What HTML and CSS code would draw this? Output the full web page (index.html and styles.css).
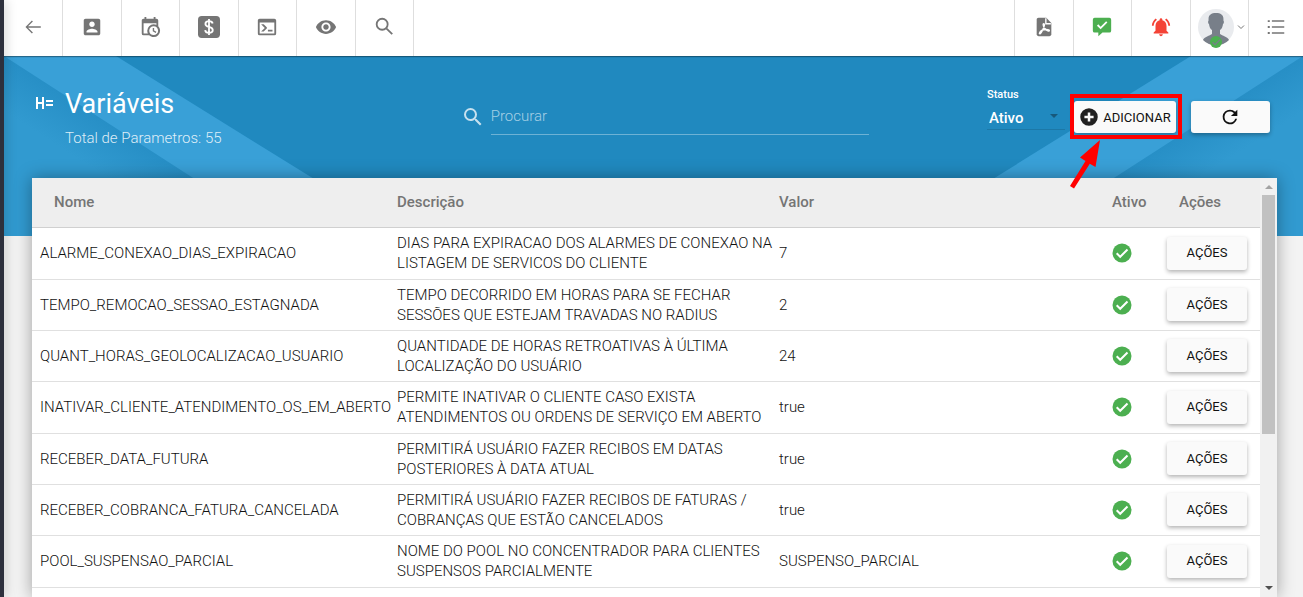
FILE: index.html
```html
<!DOCTYPE html>
<html lang="pt-BR">
<head>
<meta charset="utf-8">
<title>Variáveis</title>
<link rel="stylesheet" href="styles.css">
</head>
<body>
<div class="app">
  <div class="rail"></div>
  <div class="page">
    <header class="topbar">
      <button class="tool back" aria-label="Voltar"><svg class="icon" viewBox="0 0 24 24"><path d="M20.500 11.250H6.600l5.300-5.300L10.800 4.900 3.800 12l7 7.100 1.100-1.050-5.300-5.300H20.500z"/></svg></button>
      <nav class="tools">
        <button class="tool" aria-label="Contatos"><svg class="icon" viewBox="0 0 24 24"><path d="M3 5v14c0 1.100.89 2 2 2h14c1.100 0 2-.9 2-2V5c0-1.100-.9-2-2-2H5c-1.110 0-2 .9-2 2zm12 4c0 1.660-1.340 3-3 3s-3-1.340-3-3 1.340-3 3-3 3 1.340 3 3zm-9 8c0-2 4-3.100 6-3.100s6 1.100 6 3.100v1H6v-1z"/></svg></button>
        <button class="tool" aria-label="Agenda"><svg class="icon" viewBox="0 0 24 24"><path d="M15 13h1.500v2.820l2.440 1.410-.75 1.300L15 16.690V13m4-5H5v11h4.670c-.43-.91-.67-1.930-.67-3a7 7 0 0 1 7-7c1.070 0 2.090.24 3 .67V8M5 21a2 2 0 0 1-2-2V5c0-1.110.89-2 2-2h1V1h2v2h8V1h2v2h1a2 2 0 0 1 2 2v6.100c1.240 1.260 2 2.990 2 4.900a7 7 0 0 1-7 7c-1.910 0-3.640-.76-4.900-2H5m11-9.850A4.850 4.850 0 0 0 11.150 16c0 2.680 2.170 4.850 4.850 4.850A4.850 4.850 0 0 0 20.850 16c0-2.680-2.170-4.850-4.850-4.850z"/></svg></button>
        <button class="tool" aria-label="Financeiro"><svg class="icon" viewBox="0 0 24 24"><rect x="0" y="0" width="24" height="24" rx="4"/><path class="cut" d="M16 8.200C15.700 6.600 14.200 5.600 12 5.600c-2.300 0-3.900 1.200-3.900 3.050 0 4.300 8 2.300 8 6.600 0 1.900-1.700 3.150-4.100 3.150s-4-1.100-4.200-3M12 3.400v17.200"/></svg></button>
        <button class="tool" aria-label="Terminal"><svg class="icon" viewBox="0 0 24 24"><path d="M20 19V7H4v12h16m0-16a2 2 0 0 1 2 2v14a2 2 0 0 1-2 2H4a2 2 0 0 1-2-2V5c0-1.110.9-2 2-2h16m-7 14v-2h5v2h-5m-3.420-4L5.570 9H8.400l3.300 3.300c.39.39.39 1.030 0 1.420L8.420 17H5.590l3.990-4z"/></svg></button>
        <button class="tool" aria-label="Visualizar"><svg class="icon" viewBox="0 0 24 24"><path d="M12 4.500C7 4.500 2.730 7.610 1 12c1.730 4.390 6 7.500 11 7.500s9.270-3.110 11-7.500c-1.730-4.390-6-7.500-11-7.500zM12 17c-2.760 0-5-2.240-5-5s2.240-5 5-5 5 2.240 5 5-2.240 5-5 5zm0-8c-1.660 0-3 1.340-3 3s1.340 3 3 3 3-1.340 3-3-1.340-3-3-3z"/></svg></button>
        <button class="tool" aria-label="Pesquisar"><svg class="icon line" viewBox="0 0 24 24"><circle cx="10" cy="9" r="6"/><path d="M14.500 13.500l6.500 6.300"/></svg></button>
      </nav>
      <nav class="tools alerts">
        <button class="tool" aria-label="PDF"><svg class="icon" viewBox="0 0 24 24"><path d="M6 2h8.500L20 7.500V20a2 2 0 0 1-2 2H6a2 2 0 0 1-2-2V4c0-1.100.9-2 2-2z"/><path class="cut thin" d="M14 2.500V8.500h5.500M7 18.700c1-2.500 4.500-4.300 9.300-3.800 2.300.3 1.900 1.900.3 1.500-2.700-.7-5.200-4-5.500-6.600-.2-2.100 1.600-1.900 1.300.3-.6 3-3.200 8.400-4.400 9.100-.7.400-1.200.1-1-.5z"/></svg></button>
        <button class="tool ok" aria-label="Mensagens"><svg class="icon" viewBox="0 0 24 24"><path d="M20 2H4a2 2 0 0 0-2 2v12a2 2 0 0 0 2 2h4v4l4.500-4H20a2 2 0 0 0 2-2V4a2 2 0 0 0-2-2zM10.500 14.500L6.500 10.500l1.400-1.400 2.600 2.600 6-6 1.400 1.400z"/></svg></button>
        <button class="tool alarm" aria-label="Notificações"><svg class="icon" viewBox="0 0 24 24"><path d="M7.580 4.080L6.150 2.650C3.750 4.480 2.170 7.300 2.030 10.500h2c.15-2.650 1.510-4.970 3.550-6.420zm12.390 6.420h2c-.15-3.200-1.730-6.020-4.120-7.850l-1.420 1.430c2.020 1.450 3.390 3.770 3.540 6.420zM18 11c0-3.070-1.640-5.640-4.500-6.320V4c0-.83-.67-1.500-1.500-1.500s-1.500.67-1.500 1.500v.68C7.630 5.360 6 7.920 6 11v5l-2 2v1h16v-1l-2-2v-5zm-6 11c1.100 0 2-.9 2-2h-4c0 1.100.89 2 2 2z"/></svg></button>
        <button class="tool user" aria-label="Conta">
          <svg class="avatar" viewBox="0 0 36 40"><circle cx="18" cy="18" r="18" fill="#e9ebee"/><path fill="#787f89" d="M5 31c1-3 7-4.500 9-6v-4c-2-1-2.700-4-3-6-1-.5-1.200-3-.4-3.500C10 6 13 4 18 4s8 2 7.400 7.500c.8.500.6 3-.4 3.500-.3 2-1 5-3 6v4c2 1.500 8 3 9 6a18 18 0 0 1-26 0z"/><circle cx="18" cy="33" r="6" fill="#4caf50"/><path fill="none" stroke="#787f89" stroke-width="1.300" d="M14.500 33.200l2.500 2.500 5-5"/></svg>
          <svg class="chevron" viewBox="0 0 8 8"><path d="M1 2.500l3 3 3-3"/></svg>
        </button>
      </nav>
      <button class="tool menu" aria-label="Menu"><svg class="icon" viewBox="0 0 24 24"><path d="M3 4.500h2.200v2H3zm4.500.2H21v1.600H7.500zM3 11h2.200v2H3zm4.500.2H21v1.600H7.500zM3 17.500h2.200v2H3zm4.500.2H21v1.600H7.500z"/></svg></button>
    </header>

    <main class="main">
      <div class="backdrop">
        <svg class="rays" viewBox="0 0 330 180">
          <defs><linearGradient id="shade" gradientUnits="userSpaceOnUse" x1="110" y1="71" x2="85" y2="110"><stop offset="0" stop-color="#278fc6"/><stop offset="1" stop-color="#319ad0"/></linearGradient></defs>
          <path fill="#39a0d7" d="M0 0H112L402 180H0z"/><path fill="url(#shade)" d="M0 0L279 180H0z"/>
        </svg>
        <svg class="rays flip" viewBox="0 0 330 180">
          <path fill="#39a0d7" d="M0 0H112L402 180H0z"/><path fill="url(#shade)" d="M0 0L279 180H0z"/>
        </svg>
      </div>

      <section class="hero">
        <div class="heading">
          <svg class="mark" viewBox="0 0 18 14"><path d="M2 1v12M8 1v12M2 7H8M11 5H18M11 9H18"/></svg>
          <div>
            <h1 class="title">Variáveis</h1>
            <p class="subtitle">Total de Parametros: 55</p>
          </div>
        </div>
        <div class="search">
          <svg class="icon24" viewBox="0 0 24 24"><path d="M15.500 14h-.79l-.28-.27A6.470 6.470 0 0 0 16 9.500 6.500 6.500 0 1 0 9.500 16c1.610 0 3.090-.59 4.230-1.570l.27.28v.79l5 4.990L20.490 19l-4.990-5zm-6 0C7.010 14 5 11.990 5 9.500S7.010 5 9.500 5 14 7.010 14 9.500 11.990 14 9.500 14z"/></svg>
          <input class="query" type="text" placeholder="Procurar" aria-label="Procurar">
        </div>
        <div class="actions">
          <div class="status">
            <label class="status-label" for="status">Status</label>
            <select class="status-select" id="status"><option>Ativo</option></select>
            <svg class="caret" viewBox="0 0 8 4"><path d="M0 0h8L4 4z"/></svg>
          </div>
          <div class="spot">
            <button class="raised add"><svg class="plus" viewBox="0 0 24 24"><path d="M12 1.500a10.500 10.500 0 1 0 0 21 10.500 10.500 0 0 0 0-21zm5.500 12h-4v4h-3v-4h-4v-3h4v-4h3v4h4z"/></svg>ADICIONAR</button>
            <svg class="arrow" viewBox="0 0 34 50"><path d="M31 1L26.500 28l-5.700-3.200L5 49.500 1 47l15.500-25-5.500-3.500z"/></svg>
          </div>
          <button class="raised refresh" aria-label="Atualizar"><svg class="icon24" viewBox="0 0 24 24"><path d="M17.650 6.350A7.960 7.960 0 0 0 12 4a8 8 0 1 0 7.730 10h-2.080A6 6 0 1 1 12 6c1.660 0 3.140.69 4.220 1.780L13 11h7V4l-2.350 2.350z"/></svg></button>
        </div>
      </section>

      <section class="card">
        <div class="viewport">
          <table class="grid">
            <colgroup><col class="c-name"><col class="c-desc"><col><col class="c-on"><col class="c-act"></colgroup>
            <thead><tr><th class="first">Nome</th><th>Descrição</th><th>Valor</th><th>Ativo</th><th class="last">Ações</th></tr></thead>
            <tbody>
              <tr><td>ALARME_CONEXAO_DIAS_EXPIRACAO</td><td>DIAS PARA EXPIRACAO DOS ALARMES DE CONEXAO NA<br>LISTAGEM DE SERVICOS DO CLIENTE</td><td>7</td><td><svg class="check" viewBox="0 0 20 20"><use href="#tick"/></svg></td><td><button class="raised row-btn">AÇÕES</button></td></tr>
              <tr><td>TEMPO_REMOCAO_SESSAO_ESTAGNADA</td><td>TEMPO DECORRIDO EM HORAS PARA SE FECHAR<br>SESSÕES QUE ESTEJAM TRAVADAS NO RADIUS</td><td>2</td><td><svg class="check" viewBox="0 0 20 20"><use href="#tick"/></svg></td><td><button class="raised row-btn">AÇÕES</button></td></tr>
              <tr><td>QUANT_HORAS_GEOLOCALIZACAO_USUARIO</td><td>QUANTIDADE DE HORAS RETROATIVAS À ÚLTIMA<br>LOCALIZAÇÃO DO USUÁRIO</td><td>24</td><td><svg class="check" viewBox="0 0 20 20"><use href="#tick"/></svg></td><td><button class="raised row-btn">AÇÕES</button></td></tr>
              <tr><td>INATIVAR_CLIENTE_ATENDIMENTO_OS_EM_ABERTO</td><td>PERMITE INATIVAR O CLIENTE CASO EXISTA<br>ATENDIMENTOS OU ORDENS DE SERVIÇO EM ABERTO</td><td>true</td><td><svg class="check" viewBox="0 0 20 20"><use href="#tick"/></svg></td><td><button class="raised row-btn">AÇÕES</button></td></tr>
              <tr><td>RECEBER_DATA_FUTURA</td><td>PERMITIRÁ USUÁRIO FAZER RECIBOS EM DATAS<br>POSTERIORES À DATA ATUAL</td><td>true</td><td><svg class="check" viewBox="0 0 20 20"><use href="#tick"/></svg></td><td><button class="raised row-btn">AÇÕES</button></td></tr>
              <tr><td>RECEBER_COBRANCA_FATURA_CANCELADA</td><td>PERMITIRÁ USUÁRIO FAZER RECIBOS DE FATURAS /<br>COBRANÇAS QUE ESTÃO CANCELADOS</td><td>true</td><td><svg class="check" viewBox="0 0 20 20"><use href="#tick"/></svg></td><td><button class="raised row-btn">AÇÕES</button></td></tr>
              <tr><td>POOL_SUSPENSAO_PARCIAL</td><td>NOME DO POOL NO CONCENTRADOR PARA CLIENTES<br>SUSPENSOS PARCIALMENTE</td><td>SUSPENSO_PARCIAL</td><td><svg class="check" viewBox="0 0 20 20"><use href="#tick"/></svg></td><td><button class="raised row-btn">AÇÕES</button></td></tr>
            </tbody>
          </table>
        </div>
        <div class="scrollbar">
          <svg class="up" viewBox="0 0 8 4"><path d="M0 4h8L4 0z"/></svg>
          <div class="track"><div class="thumb"></div></div>
          <svg class="down" viewBox="0 0 8 4"><path d="M0 0h8L4 4z"/></svg>
        </div>
      </section>
    </main>
  </div>
</div>
<svg class="defs" aria-hidden="true"><symbol id="tick" viewBox="0 0 20 20"><circle cx="10" cy="10" r="9.500" fill="#4caf50"/><path d="M4.700 10.300l3.500 3.500 7.300-7.300" fill="none" stroke="#fff" stroke-width="2"/></symbol></svg>
</body>
</html>
```
FILE: styles.css
```css
* { box-sizing: border-box; }
body { margin: 0; font-family: Roboto, "Liberation Sans", sans-serif; font-size: 15px; color: #111; overflow: hidden; }
button, input, select { font: inherit; color: inherit; }
button { border: 0; padding: 0; cursor: pointer; }
svg { display: block; flex: none; }
.defs { position: absolute; width: 0; height: 0; }

.app { display: flex; height: 100vh; background: #f3f3f3; }
.rail { flex: 0 0 4px; background: #2d303d; box-shadow: 0 0 12px rgba(0, 0, 0, .35); z-index: 3; }
.page { flex: 1; min-width: 0; display: flex; flex-direction: column; }

.topbar { display: flex; height: 56px; background: #fff; box-shadow: 0 1px 1px rgba(0, 0, 0, .35); position: relative; z-index: 2; }
.tool { display: flex; align-items: center; justify-content: center; background: none; color: #757575; border-left: 1px solid #dedede; padding-bottom: 2px; }
.tool.back { width: 58px; border-left: 0; }
.tools { display: grid; grid-template-columns: repeat(6, 1fr); width: 352px; border-right: 1px solid #dedede; }
.tools.alerts { grid-template-columns: repeat(4, 1fr); width: 234px; margin-left: auto; border-right: 0; }
.tool.menu { width: 55px; }
.tool.ok { color: #4caf50; }
.tool.alarm { color: #f44336; }
.icon { width: 22px; height: 22px; fill: currentColor; }
.icon.line { fill: none; stroke: currentColor; stroke-width: 2; }
.icon24 { width: 24px; height: 24px; fill: currentColor; }
.cut { fill: none; stroke: #fff; stroke-width: 2; }
.cut.thin { stroke-width: 1.500; }
.tool.user { gap: 3px; padding: 2px 0 0 4px; }
.avatar { width: 36px; height: 40px; }
.chevron { width: 8px; height: 8px; margin-bottom: 4px; fill: none; stroke: #757575; }

.main { flex: 1; min-height: 0; display: flex; flex-direction: column; position: relative; }
.backdrop { position: absolute; top: 0; left: 0; right: 0; height: 180px; background: #2089bf; overflow: hidden; }
.rays { position: absolute; top: 0; left: 0; width: 330px; height: 180px; }
.rays.flip { left: auto; right: 0; transform: scaleX(-1); }

.hero { flex: 0 0 122px; display: grid; grid-template-columns: 35fr 32fr 33fr; position: relative; z-index: 1; color: #fff; }
.heading { display: flex; gap: 12px; padding: 31px 0 0 31px; }
.mark { width: 18px; height: 14px; margin-top: 9px; fill: none; stroke: #fff; stroke-width: 2; }
.title { margin: 0; font-size: 27px; line-height: 34px; font-weight: 400; }
.subtitle { margin: 7px 0 0; line-height: 20px; font-weight: 300; color: rgba(255, 255, 255, .85); }
.search { display: flex; align-items: center; gap: 6px; align-self: start; margin-top: 42px; padding: 0 5px 0 2px; color: rgba(255, 255, 255, .75); }
.query { flex: 1; min-width: 0; height: 37px; padding: 0; border: 0; border-bottom: 1px solid rgba(255, 255, 255, .35); background: none; outline: 0; }
.query::placeholder { color: rgba(255, 255, 255, .6); font-weight: 300; }
.actions { display: flex; justify-content: flex-end; align-items: flex-start; padding: 45px 33px 0 0; }
.status { width: 78px; margin-right: 9px; margin-top: -14px; display: flex; flex-direction: column; position: relative; }
.status-label { font-size: 11px; line-height: 15px; font-weight: 500; }
.status-select { appearance: none; height: 28px; padding: 4px 2px 0; border: 0; border-bottom: 1px solid rgba(0, 0, 0, .12); background: none; font-weight: 500; }
.caret { position: absolute; right: 7px; top: 27px; width: 8px; height: 4px; fill: #17597c; }

.raised { display: flex; align-items: center; justify-content: center; background: #fafafa; color: #111; border-radius: 3px; font-size: 13px; font-weight: 400; box-shadow: 0 2px 4px rgba(0, 0, 0, .3); }
.add { width: 102px; height: 32px; gap: 4px; }
.plus { width: 20px; height: 20px; fill: #212121; }
.refresh { width: 79px; height: 32px; margin-left: 15px; }
.refresh .icon24 { width: 22px; height: 22px; }
.spot { position: relative; }
.spot::after { content: ""; position: absolute; inset: -7px -6px -6px -4px; border: 4px solid #f00; pointer-events: none; }
.arrow { position: absolute; left: -5px; top: 38px; width: 34px; height: 50px; fill: #f00; z-index: 2; }

.card { flex: 1; min-height: 0; display: flex; margin: 0 26px 0 28px; background: #fff; box-shadow: 0 0 16px rgba(0, 0, 0, .35); position: relative; }
.viewport { flex: 1; min-width: 0; overflow: hidden; }
.grid { width: 100%; table-layout: fixed; border-collapse: collapse; line-height: 20px; }
.c-name { width: 357px; }
.c-desc { width: 382px; }
.c-on { width: 55px; }
.c-act { width: 101px; }
.grid th { height: 49px; padding: 0 0 1px 8px; background: #eee; color: #757575; font-weight: 500; text-align: left; border-bottom: 1px solid #d0d0d0; }
.grid .first { padding-left: 22px; }
.grid .last { padding-left: 20px; }
.grid td { height: 51px; padding: 0 0 0 8px; font-weight: 300; white-space: nowrap; border-bottom: 1px solid #e0e0e0; }
.grid tr:nth-child(3n + 1) td { height: 52px; }
.check { width: 20px; height: 20px; }
.row-btn { width: 80px; height: 33px; }

.scrollbar { flex: 0 0 17px; display: flex; flex-direction: column; align-items: center; background: #f1f1f1; padding: 7px 0; }
.up, .down { width: 8px; height: 4px; }
.up { fill: #a3a3a3; }
.down { fill: #505050; }
.track { flex: 1; width: 13px; margin: 6px 0; }
.thumb { height: 62%; background: #c1c1c1; }
```
